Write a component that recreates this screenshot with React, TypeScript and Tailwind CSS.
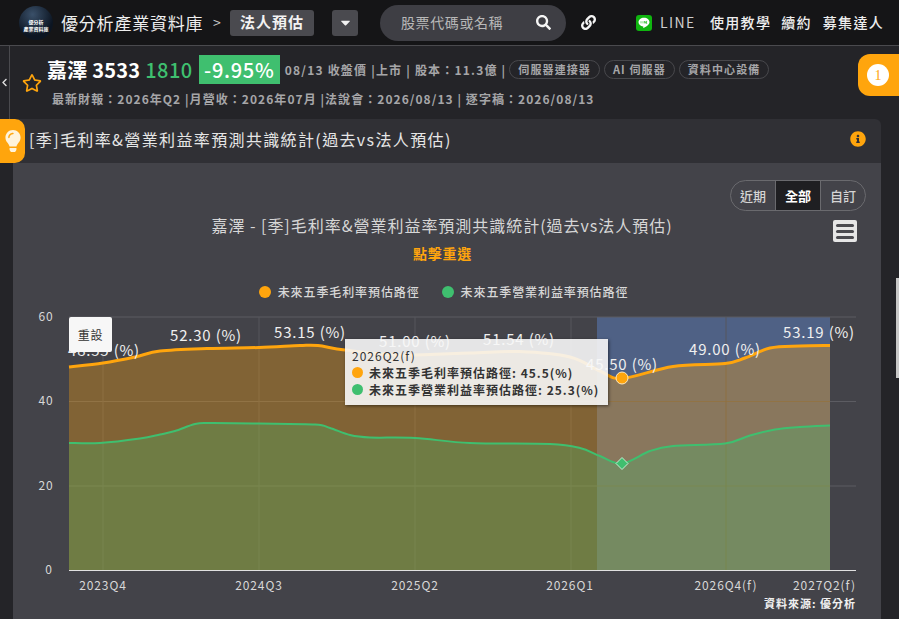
import React from 'react';
import { FaSearch, FaLink, FaLightbulb, FaInfoCircle, FaRegStar, FaCaretDown, FaChevronLeft } from 'react-icons/fa';

const FONT = "'Noto Sans CJK TC', 'Noto Sans', sans-serif";

const grossMargin: [number, number][] = [
    [69, 367], [103, 363], [135, 357], [160, 351], [207, 348.5], [259, 347.5], [300, 345.5], [318, 345.5],
    [345, 350], [400, 355], [470, 353], [519, 351.5], [570, 357], [600, 371], [622, 378.5], [673, 366.5],
    [725, 363.5], [745, 358], [770, 348], [800, 346], [830, 345.5],
];

const opMargin: [number, number][] = [
    [69, 443], [100, 443], [140, 438.5], [160, 434.5], [175, 431], [195, 424], [210, 423], [259, 423.5], [315, 424.5],
    [330, 428], [350, 435], [370, 437.5], [415, 438], [470, 443], [550, 444], [580, 448], [600, 456], [622, 463.5], [650, 451],
    [673, 446], [725, 443.5], [750, 435.5], [775, 429.5], [800, 427], [830, 425.5],
];

// smooth line through the points
const smooth = (pts: [number, number][]) => {
    let d = `M${pts[0][0]} ${pts[0][1]}`;
    for (let i = 0; i < pts.length - 1; i++) {
        const p0 = pts[Math.max(i - 1, 0)];
        const p1 = pts[i];
        const p2 = pts[i + 1];
        const p3 = pts[Math.min(i + 2, pts.length - 1)];
        const c1x = p1[0] + (p2[0] - p0[0]) / 6;
        const c1y = p1[1] + (p2[1] - p0[1]) / 6;
        const c2x = p2[0] - (p3[0] - p1[0]) / 6;
        const c2y = p2[1] - (p3[1] - p1[1]) / 6;
        d += ` C${c1x} ${c1y} ${c2x} ${c2y} ${p2[0]} ${p2[1]}`;
    }
    return d;
};

const gmLine = smooth(grossMargin);
const omLine = smooth(opMargin);
const gmArea = `${gmLine} L830 570 L69 570 Z`;
const omArea = `${omLine} L830 570 L69 570 Z`;

const dataLabels = [
    { x: 104, y: 356, t: '48.55 (%)' },
    { x: 206, y: 341, t: '52.30 (%)' },
    { x: 310, y: 338, t: '53.15 (%)' },
    { x: 415, y: 347, t: '51.00 (%)' },
    { x: 519, y: 345, t: '51.54 (%)' },
    { x: 622, y: 370, t: '45.50 (%)' },
    { x: 725, y: 355, t: '49.00 (%)' },
    { x: 819, y: 338, t: '53.19 (%)' },
];

const Chart = () => (
    <svg width={868} height={314} viewBox="13 305 868 314" className="block" style={{ fontFamily: FONT }}>
        <rect x={597} y={317} width={233} height={253} fill="#4f6185" />
        <path d="M69 317H856M69 401.5H856M69 486H856" stroke="#5c5c62" strokeWidth={1} />
        <path d="M103 317V570M259 317V570M415 317V570M571 317V570M726 317V570" stroke="#56565c" strokeWidth={1} />
        <path d={gmArea} fill="#ffa50d" fillOpacity={0.33} />
        <path d={omArea} fill="#3fbf6f" fillOpacity={0.27} />
        <path d={omLine} fill="none" stroke="#3fbf6f" strokeWidth={2} />
        <path d={gmLine} fill="none" stroke="#ffa50d" strokeWidth={3} />
        <path d="M69 570.5H856" stroke="#e0e0e0" strokeWidth={1} />
        {dataLabels.map((l) => (
            <text key={l.t} x={l.x} y={l.y} textAnchor="middle" fontSize={15} fill="#f0f0f0" letterSpacing={0.8}>
                {l.t}
            </text>
        ))}
        <g fontSize={12} fill="#d8d8d8" letterSpacing={0.9}>
            <text x={46} y={321} textAnchor="middle">60</text>
            <text x={46} y={405} textAnchor="middle">40</text>
            <text x={46} y={490} textAnchor="middle">20</text>
            <text x={49} y={574} textAnchor="middle">0</text>
            <text x={103} y={590} textAnchor="middle">2023Q4</text>
            <text x={259} y={590} textAnchor="middle">2024Q3</text>
            <text x={415} y={590} textAnchor="middle">2025Q2</text>
            <text x={570} y={590} textAnchor="middle">2026Q1</text>
            <text x={726} y={590} textAnchor="middle">2026Q4(f)</text>
            <text x={856} y={590} textAnchor="end">2027Q2(f)</text>
        </g>
        <text x={856} y={608} textAnchor="end" fontSize={11} fontWeight={700} fill="#f0f0f0" letterSpacing={1}>
            資料來源: 優分析
        </text>
        <circle cx={622} cy={378} r={6} fill="#ffa50d" stroke="#ffe9bd" strokeWidth={1} />
        <path d="M622 457.5L628 463.5L622 469.5L616 463.5Z" fill="#3fbf6f" stroke="#c4f0d4" strokeWidth={1} />
    </svg>
);

const LineIcon = () => (
    <svg width={16} height={16} viewBox="0 0 16 16" className="ml-[40px]">
        <rect width={16} height={16} rx={3} fill="#0fb50f" />
        <path d="M8 2.8c-3.1 0-5.5 1.9-5.5 4.4 0 2.2 2 4 4.6 4.3.4.1.3.5.2 1.2 0 .3.2.4.5.2 1.6-.9 5.7-3.2 5.7-5.7 0-2.5-2.4-4.4-5.5-4.4Z" fill="#ffffff" />
        <path d="M5 6.2v2.2M7 6.2v2.2M8.5 8.4V6.2l1.4 2.2V6.2M11.2 6.2h-.7v2.2h.7" stroke="#0fb50f" strokeWidth={0.6} fill="none" />
    </svg>
);

const App: React.FC = () => {
    return (
        <div className="relative w-[899px] h-[619px] overflow-hidden bg-[#242428] text-white" style={{ fontFamily: FONT }}>
            {/* top nav */}
            <header className="h-[46px] bg-[#151517] border-b border-[#4a4a4e] flex items-center pl-[19px]">
                <div className="w-[34px] h-[34px] rounded-full bg-[radial-gradient(circle_at_40%_25%,#3a5069,#0c1522_65%)] flex flex-col items-center justify-center pt-[4px] text-[5px] leading-[7px] font-bold whitespace-nowrap">
                    <span>優分析</span>
                    <span>產業資料庫</span>
                </div>
                <span className="ml-[8px] w-[143px] text-[17px] tracking-[0.8px] text-[#eeeeee] whitespace-nowrap">優分析產業資料庫</span>
                <span className="ml-[9px] w-[17px] text-[14px] text-[#cccccc]">&gt;</span>
                <div className="w-[84px] h-[26px] rounded-[3px] bg-[#4a4a4f] flex items-center justify-center text-[15px] font-bold tracking-[1px] text-[#f2f2f2]">法人預估</div>
                <div className="ml-[18px] w-[26px] h-[26px] rounded-[3px] bg-[#4a4a4f] flex items-center justify-center">
                    <FaCaretDown size={15} color="#f2f2f2" />
                </div>
                <div className="ml-[22px] w-[186px] h-[36px] rounded-[18px] bg-[#3e3e44] flex items-center pl-[21px] pr-[15px] justify-between">
                    <span className="text-[14px] tracking-[0.6px] text-[#b8b8b8]">股票代碼或名稱</span>
                    <FaSearch size={15} color="#f5f5f5" />
                </div>
                <FaLink size={15} color="#f5f5f5" className="ml-[15px]" />
                <LineIcon />
                <span className="ml-[8px] w-[36px] text-[14px] tracking-[1.4px] text-[#cfcfcf]">LINE</span>
                <span className="ml-[14px] text-[14px] font-medium tracking-[1.3px] text-[#eeeeee]">使用教學</span>
                <span className="ml-[10px] text-[14px] font-medium tracking-[1.3px] text-[#eeeeee]">續約</span>
                <span className="ml-[11px] text-[14px] font-medium tracking-[1.3px] text-[#eeeeee]">募集達人</span>
            </header>

            {/* stock info */}
            <div className="h-[73px] flex">
                <div className="w-[10px] border-r border-[#4a4a4e] flex items-center justify-center text-[#dddddd]">
                    <FaChevronLeft size={9} />
                </div>
                <div className="pl-[12px] pt-[1px] flex items-center">
                    <FaRegStar size={20} color="#ffa50d" />
                </div>
                <div className="pl-[5px] flex flex-col">
                    <div className="h-[39px] pt-[8px] flex items-center whitespace-nowrap">
                        <span className="text-[20px] font-bold tracking-[0.2px]">嘉澤 3533</span>
                        <span className="ml-[5px] text-[20px] font-medium tracking-[0.5px] text-[#3fbf6f]">1810</span>
                        <span className="ml-[6px] w-[81px] h-[29px] bg-[#3fbf6f] flex items-center justify-center text-[20px] font-medium tracking-[0.7px]">-9.95%</span>
                        <span className="ml-[5px] text-[12px] font-bold tracking-[1.2px] text-[#a6a6a8]">08/13 收盤價 |上市 | 股本：11.3億 |</span>
                        <div className="ml-[3px] flex gap-[4px] text-[11px] font-bold tracking-[1.1px] text-[#a6a6a8]">
                            <span className="h-[19px] px-[8px] rounded-full border border-[#48484c] flex items-center">伺服器連接器</span>
                            <span className="h-[19px] px-[8px] rounded-full border border-[#48484c] flex items-center">AI 伺服器</span>
                            <span className="h-[19px] px-[8px] rounded-full border border-[#48484c] flex items-center">資料中心設備</span>
                        </div>
                    </div>
                    <div className="mt-[5px] pl-[5px] text-[12px] font-bold tracking-[1.05px] text-[#a6a6a8] whitespace-nowrap">
                        最新財報：2026年Q2 |月營收：2026年07月 |法說會：2026/08/13 | 逐字稿：2026/08/13
                    </div>
                </div>
            </div>

            {/* card */}
            <section className="ml-[13px] w-[868px] rounded-t-[6px] overflow-hidden">
                <div className="h-[44px] bg-[#303035] flex items-center justify-between pl-[16px] pr-[15px] pb-[4px]">
                    <h2 className="text-[16px] tracking-[1.37px] text-[#e6e6e6]">[季]毛利率&amp;營業利益率預測共識統計(過去vs法人預估)</h2>
                    <FaInfoCircle size={16} color="#ffa50d" />
                </div>
                <div className="relative h-[456px] bg-[#434349]">
                    <div className="pt-[17px] pr-[15px] flex justify-end">
                        <div className="h-[31px] flex rounded-full border border-[#6a6a6e] overflow-hidden text-[13px] font-medium text-[#d4d4d4]">
                            <span className="w-[45px] flex items-center justify-center border-r border-[#6a6a6e]">近期</span>
                            <span className="w-[44px] flex items-center justify-center bg-[#1f1f22] text-white font-bold">全部</span>
                            <span className="w-[45px] flex items-center justify-center border-l border-[#6a6a6e]">自訂</span>
                        </div>
                    </div>
                    <h3 className="mt-[1px] pr-[10px] h-[26px] flex items-center justify-center text-[16px] tracking-[0.97px] text-[#d6d6d6]">嘉澤 - [季]毛利率&amp;營業利益率預測共識統計(過去vs法人預估)</h3>
                    <p className="mt-[6px] pr-[9px] h-[18px] flex items-center justify-center text-[14px] font-bold tracking-[0.8px] text-[#ffa50d]">點擊重選</p>
                    <div className="mt-[21px] pr-[7px] h-[18px] flex items-center justify-center gap-[22px] text-[12px] font-medium tracking-[0.9px] text-[#d8d8d8]">
                        <span className="flex items-center gap-[7px]"><i className="w-[12px] h-[12px] rounded-full bg-[#ffa50d]" />未來五季毛利率預估路徑</span>
                        <span className="flex items-center gap-[7px]"><i className="w-[12px] h-[12px] rounded-full bg-[#3fbf6f]" />未來五季營業利益率預估路徑</span>
                    </div>
                    <div className="absolute left-0 top-[142px]">
                        <Chart />
                    </div>

                    {/* chart overlays */}
                    <div className="absolute right-[24px] top-[57px] w-[24px] h-[22px] rounded-[2px] bg-[#e6e6e6] flex flex-col justify-center gap-[3px] px-[3px]">
                        <i className="h-[3px] rounded-full bg-[#4a4a4f]" />
                        <i className="h-[3px] rounded-full bg-[#4a4a4f]" />
                        <i className="h-[3px] rounded-full bg-[#4a4a4f]" />
                    </div>
                    <div className="absolute left-[56px] top-[154px] w-[43px] h-[35px] rounded-[2px] bg-[#f7f7f7] flex items-center justify-center text-[12px] tracking-[0.8px] text-[#333333]">重設</div>
                    <div className="absolute left-[332px] top-[176px] w-[263px] h-[66px] bg-[#f7f7f7]/90 shadow-[1px_1px_3px_rgba(0,0,0,0.5)] pl-[7px] pt-[8px] text-[12px] leading-[17px] tracking-[1px] text-[#333333] whitespace-nowrap">
                        <div>2026Q2(f)</div>
                        <div className="flex items-center gap-[6px] font-bold"><i className="w-[11px] h-[11px] rounded-full bg-[#ffa50d]" />未來五季毛利率預估路徑: 45.5(%)</div>
                        <div className="flex items-center gap-[6px] font-bold"><i className="w-[11px] h-[11px] rounded-full bg-[#3fbf6f]" />未來五季營業利益率預估路徑: 25.3(%)</div>
                    </div>
                </div>
            </section>

            {/* floating tabs */}
            <div className="absolute left-0 top-[119px] w-[25px] h-[44px] rounded-r-[10px] bg-[#ffa50d] flex items-center justify-center">
                <FaLightbulb size={22} color="#fff4dc" />
            </div>
            <div className="absolute right-0 top-[54px] w-[41px] h-[42px] rounded-l-[12px] bg-[#ffa50d] flex items-center pl-[9px]">
                <span className="w-[22px] h-[22px] rounded-full bg-white flex items-center justify-center text-[14px] text-[#ffa50d]" style={{ fontFamily: "'Liberation Serif', serif" }}>1</span>
            </div>
            <div className="absolute right-0 top-[278px] w-[3px] h-[100px] bg-[#c8c8c8]" />
        </div>
    );
};

export default App;
